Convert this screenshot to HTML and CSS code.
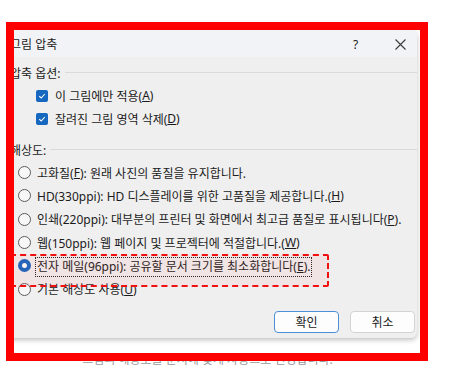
FILE: index.html
```html
<!DOCTYPE html>
<html lang="ko">
<head>
    <meta charset="UTF-8">
    <meta name="viewport" content="width=device-width, initial-scale=1.0">
    <title>그림 압축</title>
    <link rel="stylesheet" href="styles.css">
</head>
<body>
    <div class="frame">
        <div class="dialog">
            <div class="titlebar">
                <span class="title">그림 압축</span>
                <span class="help">?</span>
                <span class="close">
                    <svg width="11" height="11" viewBox="0 0 11 11">
                        <path d="M0.5 0.5 L10.5 10.5 M10.5 0.5 L0.5 10.5" stroke="#3a3a3a" stroke-width="1.1" fill="none"/>
                    </svg>
                </span>
            </div>

            <div class="body">
                <div class="group-label"><span>압축 옵션:</span></div>
                <div class="check-row">
                    <span class="checkbox">
                        <svg width="8" height="8" viewBox="0 0 8 8"><path d="M1.2 4.2 L3.2 6 L6.8 2" stroke="#fff" stroke-width="1.1" fill="none"/></svg>
                    </span>
                    이 그림에만 적용(<u>A</u>)
                </div>
                <div class="check-row">
                    <span class="checkbox">
                        <svg width="8" height="8" viewBox="0 0 8 8"><path d="M1.2 4.2 L3.2 6 L6.8 2" stroke="#fff" stroke-width="1.1" fill="none"/></svg>
                    </span>
                    잘려진 그림 영역 삭제(<u>D</u>)
                </div>

                <div class="group-label section"><span>해상도:</span></div>
                <div class="radio-row"><span class="radio"></span>고화질(<u>F</u>): 원래 사진의 품질을 유지합니다.</div>
                <div class="radio-row"><span class="radio"></span>HD(330ppi): HD 디스플레이를 위한 고품질을 제공합니다.(<u>H</u>)</div>
                <div class="radio-row"><span class="radio"></span>인쇄(220ppi): 대부분의 프린터 및 화면에서 최고급 품질로 표시됩니다(<u>P</u>).</div>
                <div class="radio-row"><span class="radio"></span>웹(150ppi): 웹 페이지 및 프로젝터에 적절합니다.(<u>W</u>)</div>
                <div class="radio-row marked">
                    <span class="radio checked"></span>
                    <span class="focus">전자 메일(96ppi): 공유할 문서 크기를 최소화합니다(<u>E</u>).</span>
                </div>
                <div class="radio-row"><span class="radio"></span>기본 해상도 사용(<u>U</u>)</div>

                <div class="buttons">
                    <button class="btn btn-primary">확인</button>
                    <button class="btn">취소</button>
                </div>
            </div>
        </div>
    </div>
    <p class="caption">그림의 해상도를 문서에 맞게 자동으로 변경합니다.</p>
</body>
</html>
```

FILE: styles.css
```css
* {
    margin: 0;
    padding: 0;
    box-sizing: border-box;
}

body {
    font-family: 'Noto Sans', 'Noto Sans CJK KR', sans-serif;
    font-size: 12px;
    color: #1b1b1b;
    background: white;
    width: 470px;
    height: 369px;
    overflow: hidden;
}

.frame {
    position: relative;
    z-index: 1;
    margin: 22px 0 0 6px;
    width: 422px;
    height: 339px;
    border: 8px solid #ff0000;
    overflow: hidden;
}

.dialog {
    margin-left: -6px;
    width: 409px;
    height: 308px;
    background: #efefef;
    border-radius: 0 6px 6px 0;
    box-shadow: 0 2px 5px rgba(0, 0, 0, 0.25);
    overflow: hidden;
}

/* title bar */
.titlebar {
    height: 27px;
    display: flex;
    align-items: center;
    background: #f2f3f7;
    padding-left: 2px;
}

.title {
    flex: 1;
    line-height: 1;
    padding-top: 2px;
}

.help {
    width: 10px;
    margin-right: 32px;
    font-size: 12px;
    padding-top: 2px;
}

.close {
    display: flex;
    margin-right: 11px;
    padding-top: 2px;
}

/* body */
.body {
    padding: 4px 1px 5px 2px;
}

.group-label {
    height: 23px;
    display: flex;
    align-items: center;
}

.group-label::after {
    content: '';
    flex: 1;
    height: 1px;
    background: #dadada;
    margin-left: 4px;
    margin-right: -1px;
}

.group-label.section {
    margin-top: 8px;
}

.check-row {
    height: 23px;
    display: flex;
    align-items: center;
    padding-left: 26px;
}

.checkbox {
    width: 12px;
    height: 12px;
    border-radius: 2px;
    background: #1667c0;
    display: flex;
    align-items: center;
    justify-content: center;
    margin-right: 7px;
}

.radio-row {
    height: 23.3px;
    display: flex;
    align-items: center;
    padding-left: 8px;
}

.radio {
    width: 13px;
    height: 13px;
    border-radius: 50%;
    border: 1px solid #5c5c5c;
    background: #f7f7f7;
    margin-right: 6px;
    flex-shrink: 0;
}

.radio.checked {
    border: 4px solid #1667c0;
    background: white;
}

.marked {
    position: relative;
}

/* red dashed annotation over the selected option */
.marked::after {
    content: '';
    position: absolute;
    left: 0;
    top: 0;
    width: 315px;
    height: 29px;
    border: 2px dashed #f01010;
    border-radius: 2px;
    background: rgba(255, 80, 80, 0.07);
    pointer-events: none;
}

.focus {
    border: 1px dotted #222;
    padding: 1px;
    margin-left: -2px;
    margin-top: 3px;
    line-height: 16px;
}

.buttons {
    display: flex;
    justify-content: flex-end;
    gap: 11px;
    margin-top: 10px;
    padding-right: 1px;
}

.btn {
    width: 65px;
    height: 22px;
    font-family: inherit;
    font-size: 12px;
    color: #1b1b1b;
    background: #fdfdfd;
    border: 1px solid #d3d3d3;
    border-radius: 4px;
}

.btn-primary {
    border-color: #4d8fd6;
}

.caption {
    margin-top: -9px;
    text-align: center;
    color: #9a9a9a;
    font-size: 12px;
    line-height: 16px;
    padding-right: 55px;
}
```
